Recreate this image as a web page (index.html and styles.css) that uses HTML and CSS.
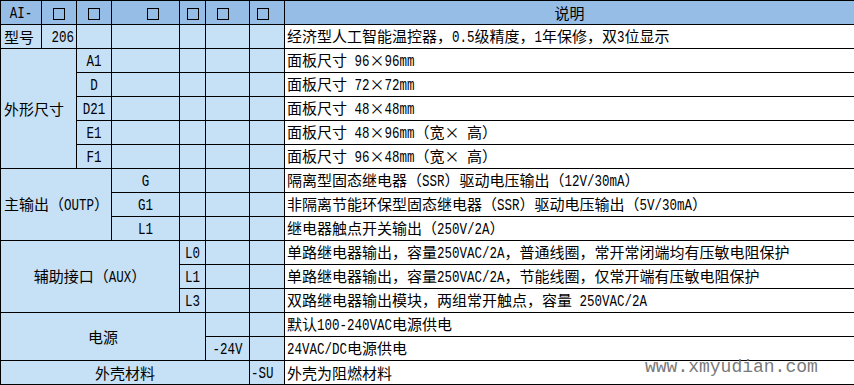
FILE: index.html
```html
<!DOCTYPE html>
<html lang="zh">
<head>
<meta charset="utf-8">
<title>AI-206 选型</title>
<link rel="stylesheet" href="styles.css">
</head>
<body>
<div class="wrap">
<table class="spec">
<colgroup>
<col class="w41"><col class="w35"><col class="w35"><col class="w68"><col class="w26"><col class="w44"><col class="w35"><col class="w570">
</colgroup>
<tr class="head">
<td class="c"><span class="en">AI-</span></td>
<td class="c"><span class="box"></span></td>
<td class="c"><span class="box"></span></td>
<td class="c shift-r"><span class="box"></span></td>
<td class="c"><span class="box"></span></td>
<td class="c shift-l"><span class="box"></span></td>
<td class="c shift-l"><span class="box"></span></td>
<td class="c">说明</td>
</tr>
<tr>
<td class="l">型号</td>
<td class="r"><span class="en">206</span></td>
<td></td><td></td><td></td><td></td><td></td>
<td class="d">经济型人工智能温控器，<span class="en">0.5</span>级精度，<span class="en">1</span>年保修，双<span class="en">3</span>位显示</td>
</tr>
<tr>
<td class="l" colspan="2" rowspan="5">外形尺寸</td>
<td class="c"><span class="en">A1</span></td>
<td></td><td></td><td></td><td></td>
<td class="d">面板尺寸<span class="en"> 96</span><span class="x">×</span><span class="en">96mm</span></td>
</tr>
<tr>
<td class="c"><span class="en">D</span></td>
<td></td><td></td><td></td><td></td>
<td class="d">面板尺寸<span class="en"> 72</span><span class="x">×</span><span class="en">72mm</span></td>
</tr>
<tr>
<td class="c"><span class="en">D21</span></td>
<td></td><td></td><td></td><td></td>
<td class="d">面板尺寸<span class="en"> 48</span><span class="x">×</span><span class="en">48mm</span></td>
</tr>
<tr>
<td class="c"><span class="en">E1</span></td>
<td></td><td></td><td></td><td></td>
<td class="d">面板尺寸<span class="en"> 48</span><span class="x">×</span><span class="en">96mm</span>（宽<span class="x">×</span><span class="en"> </span>高）</td>
</tr>
<tr>
<td class="c"><span class="en">F1</span></td>
<td></td><td></td><td></td><td></td>
<td class="d">面板尺寸<span class="en"> 96</span><span class="x">×</span><span class="en">48mm</span>（宽<span class="x">×</span><span class="en"> </span>高）</td>
</tr>
<tr>
<td class="l" colspan="3" rowspan="3">主输出（<span class="en">OUTP</span>）</td>
<td class="c"><span class="en">G</span></td>
<td></td><td></td><td></td>
<td class="d">隔离型固态继电器（<span class="en">SSR</span>）驱动电压输出（<span class="en">12V/30mA</span>）</td>
</tr>
<tr>
<td class="c"><span class="en">G1</span></td>
<td></td><td></td><td></td>
<td class="d">非隔离节能环保型固态继电器（<span class="en">SSR</span>）驱动电压输出（<span class="en">5V/30mA</span>）</td>
</tr>
<tr>
<td class="c"><span class="en">L1</span></td>
<td></td><td></td><td></td>
<td class="d">继电器触点开关输出（<span class="en">250V/2A</span>）</td>
</tr>
<tr>
<td class="c" colspan="4" rowspan="3">辅助接口（<span class="en">AUX</span>）</td>
<td class="c"><span class="en">L0</span></td>
<td></td><td></td>
<td class="d">单路继电器输出，容量<span class="en">250VAC/2A</span>，普通线圈，常开常闭端均有压敏电阻保护</td>
</tr>
<tr>
<td class="c"><span class="en">L1</span></td>
<td></td><td></td>
<td class="d">单路继电器输出，容量<span class="en">250VAC/2A</span>，节能线圈，仅常开端有压敏电阻保护</td>
</tr>
<tr>
<td class="c"><span class="en">L3</span></td>
<td></td><td></td>
<td class="d">双路继电器输出模块，两组常开触点，容量<span class="en"> 250VAC/2A</span></td>
</tr>
<tr>
<td class="c" colspan="5" rowspan="2">电源</td>
<td></td><td></td>
<td class="d">默认<span class="en">100-240VAC</span>电源供电</td>
</tr>
<tr>
<td class="c"><span class="en">-24V</span></td>
<td></td>
<td class="d"><span class="en">24VAC/DC</span>电源供电</td>
</tr>
<tr>
<td class="c" colspan="6">外壳材料</td>
<td class="l2"><span class="en">-SU</span></td>
<td class="d">外壳为阻燃材料</td>
</tr>
</table>
<div class="watermark">www.xmyudian.com</div>
</div>
</body>
</html>
```
FILE: styles.css
```css
html, body {
  margin: 0;
  padding: 0;
  background: #ffffff;
}
.wrap {
  position: relative;
  width: 854px;
  height: 385px;
}
.spec {
  border-collapse: collapse;
  table-layout: fixed;
  width: 854px;
  font-family: "Noto Sans CJK SC", sans-serif;
  font-size: 15px;
  line-height: 1;
  color: #000;
}
.w41 { width: 41px; }
.w35 { width: 35px; }
.w68 { width: 68px; }
.w26 { width: 26px; }
.w44 { width: 44px; }
.w570 { width: 570px; }
.spec tr { height: 24px; }
.spec td {
  border: 1px solid #000;
  padding: 0;
  background: #c6e0f6;
  vertical-align: middle;
  white-space: nowrap;
  overflow: hidden;
}
.spec .head td { background: #96bde6; }
.spec td.d {
  background: #ffffff;
  padding-left: 2px;
}
.c { text-align: center; }
.l { text-align: left; padding-left: 3px !important; }
.l2 { text-align: left; padding-left: 1px !important; }
.r { text-align: right; padding-right: 2px !important; }
.shift-r { padding-left: 15px !important; }
.shift-l { padding-right: 9px !important; }
.en {
  display: inline-block;
  font-family: "Liberation Mono", monospace;
  font-size: 12.5px;
  white-space: pre;
  transform: scaleY(1.32);
  transform-origin: 50% 78%;
}
.x {
  display: inline-block;
  width: 15px;
  text-align: center;
}
.box {
  display: inline-block;
  width: 10px;
  height: 10px;
  border: 1px solid #000;
  vertical-align: middle;
}
.watermark {
  position: absolute;
  left: 645px;
  top: 358px;
  font-family: "Liberation Mono", monospace;
  font-size: 18px;
  color: #7a7a7a;
  line-height: 1;
}
```
